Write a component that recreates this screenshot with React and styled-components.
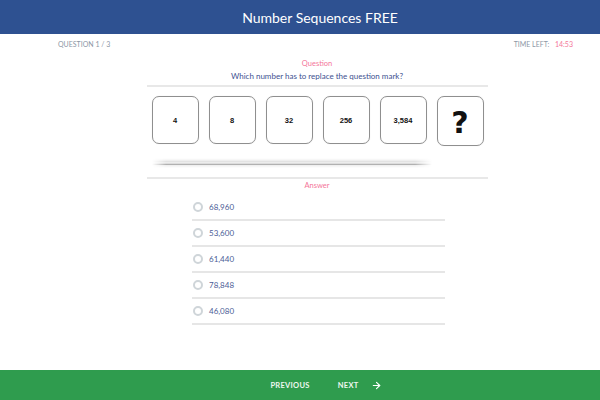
import React from 'react'
import styled, {createGlobalStyle} from 'styled-components'
import {ArrowRight} from 'lucide-react'

const sequence = ['4', '8', '32', '256', '3,584', '?']
const answers = ['68,960', '53,600', '61,440', '78,848', '46,080']

const GlobalStyle = createGlobalStyle`
  html, body {
    margin: 0;
    padding: 0;
    background: #fff;
    font-family: Lato, "Open Sans", sans-serif;
  }
`

function App() {
  return (
    <Page>
      <GlobalStyle />
      <Header>
        <h1>Number Sequences FREE</h1>
      </Header>
      <Main>
        <MetaRow>
          <span>QUESTION 1 / 3</span>
          <span>TIME LEFT: <em>14:53</em></span>
        </MetaRow>
        <Column>
          <Label>Question</Label>
          <Prompt>Which number has to replace the question mark?</Prompt>
          <Divider />
          <Tiles>
            {sequence.map((n) => (
              <Tile key={n} $big={n === '?'}>{n}</Tile>
            ))}
          </Tiles>
          <ShadowRule />
          <Divider />
          <Label $tight>Answer</Label>
          <Options>
            {answers.map((a) => (
              <Option key={a}>
                <Radio />
                <span>{a}</span>
              </Option>
            ))}
          </Options>
        </Column>
      </Main>
      <Footer>
        <NavButton>PREVIOUS</NavButton>
        <NavButton>NEXT <ArrowRight size={11} strokeWidth={2.5} /></NavButton>
      </Footer>
    </Page>
  )
}

const Page = styled.div`
  width: 600px;
  height: 400px;
  display: flex;
  flex-direction: column;
  overflow: hidden;
`

const Header = styled.header`
  height: 34px;
  flex: none;
  background-color: #2e5191;
  display: flex;
  align-items: center;
  justify-content: center;
  padding-left: 40px;
  h1 {
    margin: 0;
    color: #fff;
    font-size: 14px;
    font-weight: 400;
  }
`

const Main = styled.main`
  flex: 1;
  padding-left: 34px;
`

const MetaRow = styled.div`
  display: flex;
  justify-content: space-between;
  padding: 6px 27px 0 24px;
  height: 9px;
  font-size: 7px;
  line-height: 9px;
  color: #8d97a6;
  em {
    font-style: normal;
    color: #f4769a;
    margin-left: 4px;
  }
`

const Column = styled.div`
  width: 341px;
  margin: 0 auto;
  display: flex;
  flex-direction: column;
  align-items: center;
`

const Label = styled.div`
  margin-top: ${(p) => (p.$tight ? '2px' : '10px')};
  font-size: 7.5px;
  line-height: 10px;
  color: #f4769a;
`

const Prompt = styled.div`
  margin-top: 2px;
  font-size: 8px;
  line-height: 11px;
  color: #3d5190;
`

const Divider = styled.div`
  align-self: stretch;
  height: 2px;
  margin-top: 3px;
  background-color: #e8e8e8;
`

const Tiles = styled.div`
  display: flex;
  gap: 10px;
  margin-top: 9px;
  padding-left: 1px;
`

const Tile = styled.div`
  width: 45px;
  height: 46px;
  border: 1px solid #8f8f8f;
  border-radius: 7px;
  box-shadow: 0 0 1px rgba(0, 0, 0, 0.15);
  display: flex;
  align-items: center;
  justify-content: center;
  font-family: "Liberation Sans", Arial, sans-serif;
  font-weight: 700;
  font-size: ${(p) => (p.$big ? '30px' : '7.5px')};
  color: #111;
  ${(p) => p.$big && 'font-family: "DejaVu Sans", sans-serif; padding-top: 2px;'}
`

const ShadowRule = styled.div`
  align-self: flex-start;
  margin: 12px 0 6px 5px;
  width: 280px;
  height: 10px;
  background: linear-gradient(
    to bottom,
    rgba(0, 0, 0, 0) 0%,
    rgba(0, 0, 0, 0.04) 20%,
    rgba(0, 0, 0, 0.12) 38%,
    rgba(0, 0, 0, 0.03) 52%,
    rgba(0, 0, 0, 0.38) 62%,
    rgba(0, 0, 0, 0.06) 75%,
    rgba(0, 0, 0, 0) 100%
  );
  -webkit-mask-image: linear-gradient(to right, transparent 0%, #000 5%, #000 94%, transparent 100%);
  mask-image: linear-gradient(to right, transparent 0%, #000 5%, #000 94%, transparent 100%);
`

const Options = styled.div`
  width: 253px;
  margin-left: 3px;
  margin-top: 4px;
  display: flex;
  flex-direction: column;
`

const Option = styled.div`
  height: 24px;
  display: flex;
  align-items: center;
  gap: 6px;
  padding-left: 1px;
  border-bottom: 2px solid #e6e6e6;
  font-size: 8px;
  color: #4b5c96;
`

const Radio = styled.span`
  width: 6px;
  height: 6px;
  border-radius: 50%;
  border: 2.5px solid #cfd5d9;
  background: #fff;
`

const Footer = styled.footer`
  height: 30px;
  flex: none;
  background-color: #2f9c4e;
  display: flex;
  align-items: center;
  justify-content: center;
  gap: 28px;
  padding-left: 52px;
`

const NavButton = styled.button`
  background: transparent;
  border: none;
  padding: 0;
  display: flex;
  align-items: center;
  gap: 12px;
  color: #eef7f0;
  font-family: Lato, sans-serif;
  font-weight: 700;
  font-size: 7.5px;
  letter-spacing: 0.3px;
  svg {
    color: #fff;
  }
`

export default App
